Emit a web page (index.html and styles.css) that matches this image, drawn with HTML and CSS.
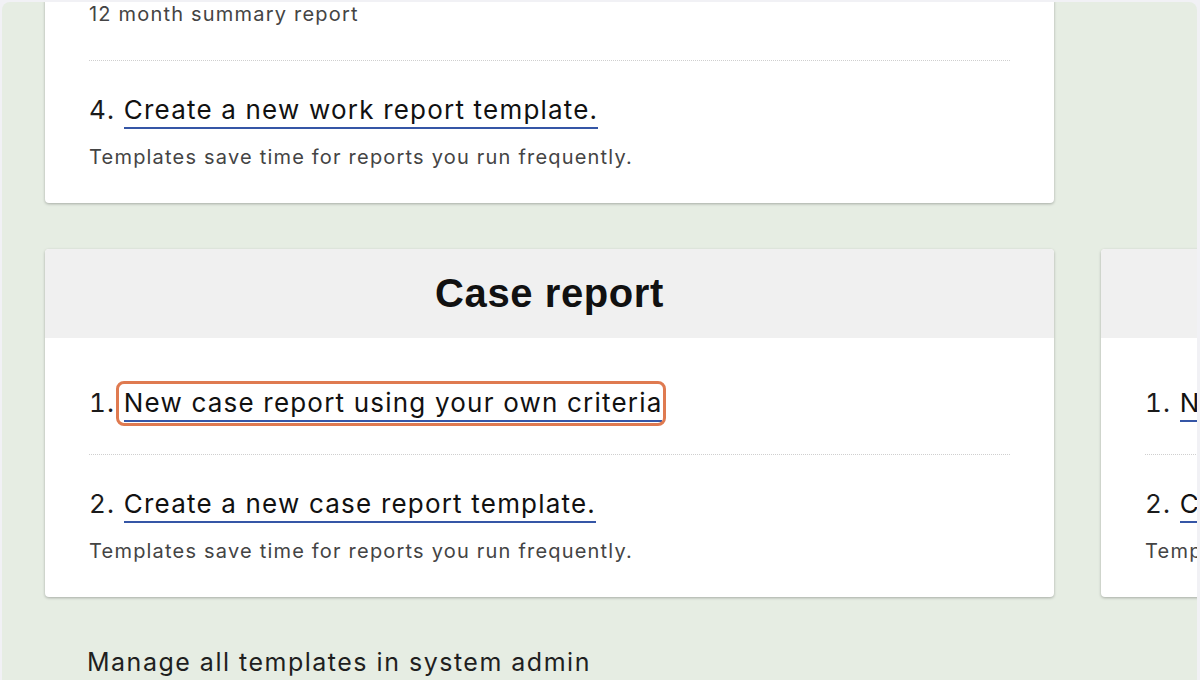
FILE: index.html
```html
<!DOCTYPE html>
<html lang="en">
<head>
<meta charset="utf-8">
<title>Reports</title>
<link rel="stylesheet" href="styles.css">
</head>
<body>
<div class="frame">
  <div class="scroller">
    <div class="grid">
      <section class="card card-top">
        <div class="body">
          <div class="item item-first">
            <p class="desc">12 month summary report</p>
          </div>
          <div class="item">
            <div class="title"><span class="num">4.</span> <a class="link" href="#">Create a new work report template.</a></div>
            <p class="desc">Templates save time for reports you run frequently.</p>
          </div>
        </div>
      </section>
      <div class="spacer"></div>

      <section class="card">
        <header class="head"><h2>Case report</h2></header>
        <div class="body body-main">
          <div class="item">
            <div class="title"><span class="num">1.</span> <a class="link highlight" href="#">New case report using your own criteria</a></div>
          </div>
          <div class="item">
            <div class="title"><span class="num">2.</span> <a class="link" href="#">Create a new case report template.</a></div>
            <p class="desc">Templates save time for reports you run frequently.</p>
          </div>
        </div>
      </section>

      <section class="card">
        <header class="head"><h2>Notes report</h2></header>
        <div class="body body-main">
          <div class="item">
            <div class="title"><span class="num">1.</span> <a class="link" href="#">New notes report using your own criteria</a></div>
          </div>
          <div class="item">
            <div class="title"><span class="num">2.</span> <a class="link" href="#">Create a new notes report template.</a></div>
            <p class="desc">Templates save time for reports you run frequently.</p>
          </div>
        </div>
      </section>
    </div>
    <p class="manage">Manage all templates in system admin</p>
  </div>
</div>
</body>
</html>
```

FILE: styles.css
```css
* { box-sizing: border-box; }

html, body {
  margin: 0;
  padding: 0;
  background: #f1f1f5;
  overflow: hidden;
}

body {
  font-family: Inter, "Noto Sans", sans-serif;
  color: #1b1b1b;
}

.frame {
  margin: 2px 3px 0 2px;
  height: 678px;
  background: #e6ede3;
  border-radius: 8px 8px 0 0;
  overflow: hidden;
}

.scroller {
  padding-left: 43px;
  margin-top: -2px;
}

.grid {
  display: grid;
  grid-template-columns: 1009px 1009px;
  column-gap: 47px;
  row-gap: 46px;
  width: 2065px;
}

.card {
  background: #fff;
  border-radius: 4px;
  box-shadow: 0 1px 3px rgba(0, 0, 0, 0.28);
  overflow: hidden;
}

.card-top {
  border-radius: 0 0 4px 4px;
}

.head {
  background: #f0f0f0;
  height: 89px;
  display: flex;
  align-items: center;
  justify-content: center;
}

.head h2 {
  margin: 0;
  font-family: "Liberation Sans", Arial, sans-serif;
  font-weight: 700;
  font-size: 40px;
  letter-spacing: 0.6px;
  color: #111;
}

.body {
  padding: 0 44px;
}

.body-main {
  padding-top: 16px;
}

.item {
  padding: 32px 0 32px;
  border-top: 1px dotted #cfcfcf;
}

.item:first-child {
  border-top: none;
}

.item-first {
  padding-top: 0;
}

.title {
  font-size: 26px;
  line-height: 34px;
  letter-spacing: 1.2px;
  color: #1b1b1b;
  white-space: nowrap;
}

.num {
  color: #1b1b1b;
  font-variant-numeric: tabular-nums;
}

.link {
  position: relative;
  display: inline-block;
  color: #111;
  text-decoration: none;
  border-bottom: 2px solid #3556a6;
  line-height: 34px;
}

.highlight::after {
  content: "";
  position: absolute;
  left: -8px;
  right: -4px;
  top: -5px;
  bottom: -6px;
  border: 3px solid #df7a50;
  border-radius: 8px;
}

.desc {
  margin: 14px 0 0;
  font-size: 20px;
  line-height: 28px;
  letter-spacing: 1.2px;
  color: #444;
  white-space: nowrap;
}

.item-first .desc {
  margin-top: 0;
}

.manage {
  margin: 49px 0 0 42px;
  font-size: 25px;
  line-height: 32px;
  letter-spacing: 1.5px;
  color: #1f1f1f;
}
```
